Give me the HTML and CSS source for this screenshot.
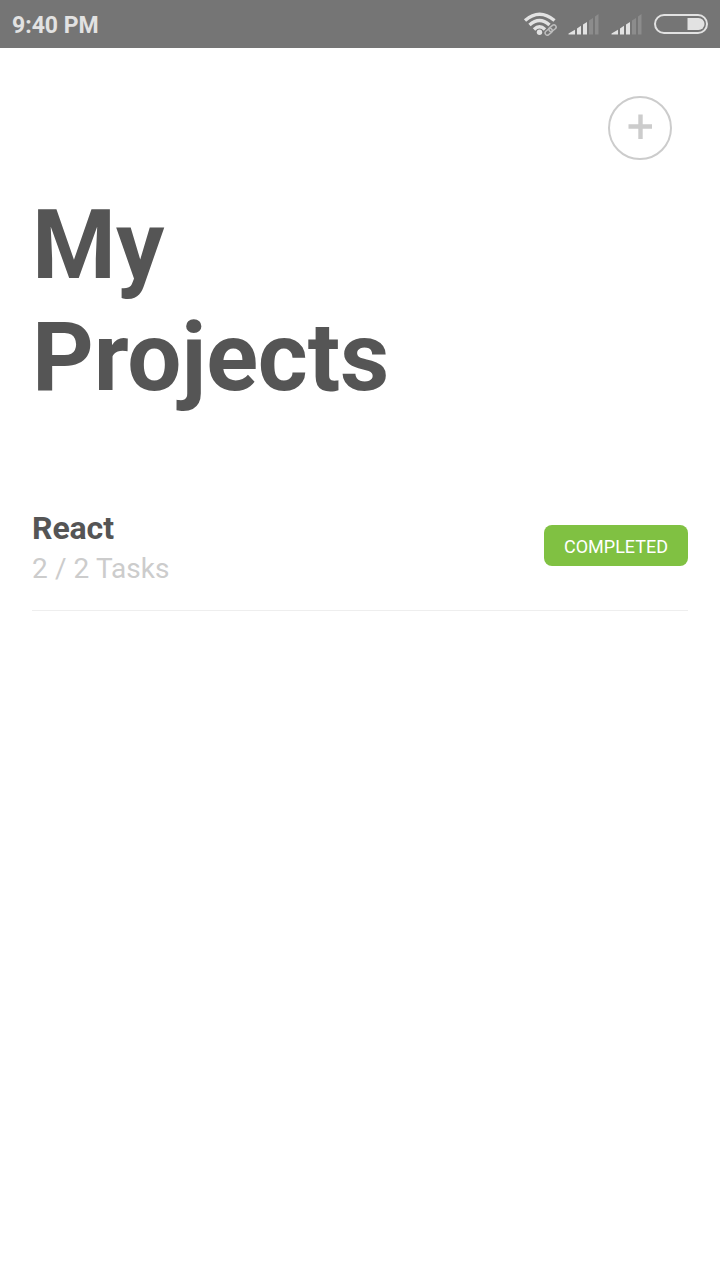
FILE: index.html
```
<!DOCTYPE html>
<html lang="en">
<head>
<meta charset="utf-8">
<title>My Projects</title>
<link rel="stylesheet" href="styles.css">
</head>
<body>
<header class="status">
  <span class="clock">9:40 PM</span>
  <svg class="status-icons" width="188" height="30" viewBox="522 9 188 30">
    <g fill="none" stroke="#e2e2e2" stroke-width="3.400">
      <path d="M525 20.500Q539.500 8 554.500 20.500"/>
      <path d="M529.500 25Q539.500 16 549.500 25"/>
      <path d="M534 29.500Q539.500 24 545 29.500"/>
    </g>
    <circle cx="539.500" cy="32.300" r="2.700" fill="#e2e2e2"/>
    <g fill="none" stroke="#bdbdbd" stroke-width="1.500">
      <rect x="-4" y="-2.200" width="8" height="4.400" rx="2.200" transform="translate(548.700 31.800) rotate(-40)"/>
      <rect x="-4" y="-2.200" width="8" height="4.400" rx="2.200" transform="translate(552.500 28.200) rotate(-40)"/>
    </g>
    <g id="signal">
      <path fill="#e2e2e2" d="M568.500 34.500V33.500L575 29.800V34.500ZM577 34.500V28.500L581 25.800V34.500ZM583 34.500V24.500L587 22V34.500Z"/>
      <path fill="#8c8c8c" d="M589 34.500V20.500L593 18V34.500ZM595 34.500V16.500L598.500 14V34.500Z"/>
    </g>
    <use href="#signal" x="43"/>
    <rect x="655" y="15" width="52" height="18" rx="9" fill="none" stroke="#e2e2e2" stroke-width="2"/>
    <path d="M687.500 18H698.500a6 6 0 0 1 0 12H687.500Z" fill="#e2e2e2"/>
  </svg>
</header>
<main class="page">
  <div class="toolbar">
    <button class="add" aria-label="Add project"><svg width="26" height="26" viewBox="0 0 26 26"><path d="M13.500 .5V25M1.500 12.500H25" stroke="#ccc" stroke-width="4.400"/></svg></button>
  </div>
  <h1 class="title">My<br>Projects</h1>
  <section class="project">
    <div>
      <h2 class="name">React</h2>
      <p class="tasks">2 / 2 Tasks</p>
    </div>
    <span class="badge">COMPLETED</span>
  </section>
</main>
</body>
</html>
```
FILE: styles.css
```
* { box-sizing: border-box; }
body { margin: 0; min-height: 1280px; background: #fff; color: #555; font-family: Roboto, sans-serif; }
.status { height: 48px; padding: 0 10px 0 12px; display: flex; align-items: center; justify-content: space-between; background: #757575; }
.clock { color: #e2e2e2; font-size: 23px; font-weight: 700; line-height: 28px; padding-top: 4px; }
.status-icons { display: block; }
.page { padding: 48px 32px 0; }
.toolbar { display: flex; justify-content: flex-end; padding-right: 16px; }
.add { width: 64px; height: 64px; padding: 0 0 2px; display: flex; align-items: center; justify-content: center; border: 2px solid #ccc; border-radius: 50%; background: none; }
.title { margin: 29px 0 0; font-size: 96px; line-height: 112px; font-weight: 700; letter-spacing: -0.15px; }
.project { margin-top: 96px; padding-bottom: 22px; display: flex; align-items: center; justify-content: space-between; border-bottom: 1px solid #eee; }
.name { margin: 0; font-size: 32px; line-height: 38px; font-weight: 700; letter-spacing: -0.1px; }
.tasks { margin: 0; padding-top: 2px; color: #ccc; font-size: 28px; line-height: 39px; word-spacing: 0.2px; }
.badge { width: 144px; height: 41px; margin-bottom: 7px; padding-top: 1px; text-align: center; line-height: 41px; border-radius: 8px; background: #80c142; color: #fff; font-size: 18px; }
```
